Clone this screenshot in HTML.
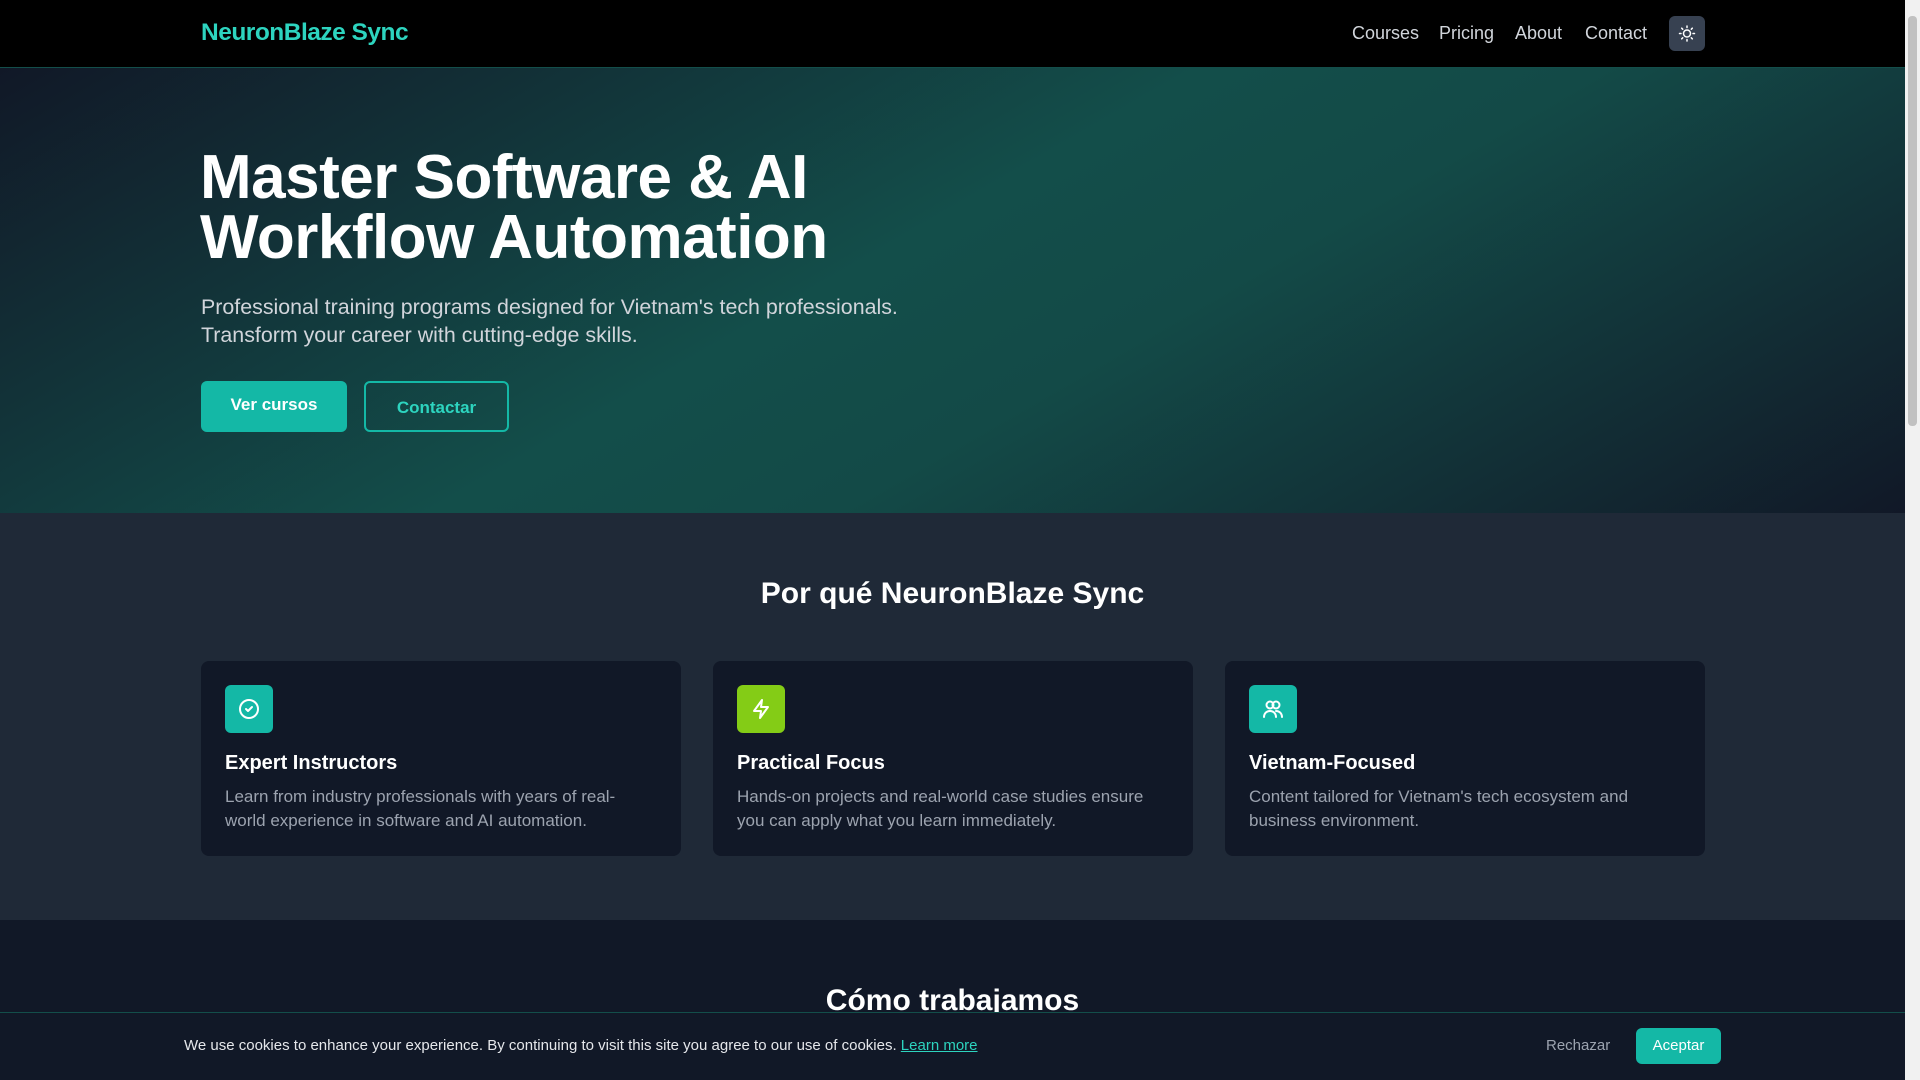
<!DOCTYPE html>
<html><head><meta charset="utf-8"><style>
*{box-sizing:border-box;margin:0;padding:0}
body{width:1920px;height:1080px;overflow:hidden;font-family:"Liberation Sans",sans-serif;background:#111827;position:relative}
.nav{position:absolute;top:0;left:0;width:1905px;height:68px;background:#000;border-bottom:1px solid #134e4a}
.logo{position:absolute;left:201px;top:19px;font-size:24.5px;font-weight:bold;color:#2dd4bf;letter-spacing:-0.5px}
.links{position:absolute;top:23px;font-size:18px;color:#d1d5db}
.tog{position:absolute;left:1669px;top:16px;width:36px;height:35px;background:#374151;border-radius:6px}
.scroll{position:absolute;right:0;top:0;width:15px;height:1080px;background:#f1f1f1}
.scroll div{position:absolute;left:3px;top:16px;width:9px;height:410px;background:#c1c1c1;border-radius:4px}
.hero{position:absolute;top:68px;left:0;width:1905px;height:445px;background:linear-gradient(150deg,#111827 0%,#134e4a 45%,#134a47 60%,#111827 100%)}
h1{position:absolute;left:200px;top:80px;font-size:62px;line-height:60px;color:#fff;font-weight:bold;letter-spacing:-0.5px}
.sub{position:absolute;left:201px;top:225px;font-size:21.4px;line-height:28px;color:#d1d5db}
.b1{position:absolute;left:201px;top:313px;width:146px;height:51px;background:#14b8a6;border-radius:6px;color:#fff;font-weight:bold;font-size:17px;text-align:center;line-height:47px}
.b2{position:absolute;left:364px;top:313px;width:145px;height:51px;border:2px solid #14b8a6;border-radius:6px;color:#2dd4bf;font-weight:bold;font-size:17px;text-align:center;line-height:49px}
.s2{position:absolute;top:513px;left:0;width:1905px;height:407px;background:#1f2937}
.s2 h2{position:absolute;top:64px;width:100%;text-align:center;font-size:30px;color:#fff}
.card{position:absolute;top:148px;width:480px;height:195px;background:#111827;border-radius:8px}
.ic{position:absolute;left:24px;top:24px;width:48px;height:48px;border-radius:6px;display:flex;align-items:center;justify-content:center}
.card h3{position:absolute;left:24px;top:91px;font-size:20px;color:#fff}
.card p{position:absolute;left:24px;top:124px;width:420px;font-size:17px;line-height:24px;color:#9ca3af}
.s3t{position:absolute;top:984px;width:1905px;text-align:center;font-size:30px;color:#fff;font-weight:bold}
.cookie{position:absolute;top:1012px;left:0;width:1905px;height:68px;background:#111827;border-top:1px solid #134e4a}
.cookie .t{position:absolute;left:184px;top:24px;font-size:15px;color:#e5e7eb}
.cookie a{color:#2dd4bf;text-decoration:underline}
.rej{position:absolute;left:1546px;top:24px;font-size:15px;color:#9ca3af}
.acc{position:absolute;left:1636px;top:15px;width:85px;height:36px;background:#14b8a6;border-radius:6px;color:#fff;font-size:15px;text-align:center;line-height:36px}
</style></head><body>
<div class="nav">
<div class="logo">NeuronBlaze Sync</div>
<span class="links" style="left:1352px">Courses</span>
<span class="links" style="left:1439px">Pricing</span>
<span class="links" style="left:1515px">About</span>
<span class="links" style="left:1585px">Contact</span>
<div class="tog"><svg width="36" height="35" viewBox="0 0 36 35"><g stroke="#fff" stroke-width="1.5" fill="none" stroke-linecap="round"><circle cx="18" cy="17.5" r="3.5"/><path d="M18 10v1.5M18 23.5v1.5M10.5 17.5h1.5M24 17.5h1.5M12.7 12.2l1 1M22.3 21.8l1 1M12.7 22.8l1-1M22.3 13.2l1-1"/></g></svg></div>
</div>
<div class="hero">
<h1>Master Software &amp; AI<br>Workflow Automation</h1>
<div class="sub">Professional training programs designed for Vietnam's tech professionals.<br>Transform your career with cutting-edge skills.</div>
<div class="b1">Ver cursos</div>
<div class="b2">Contactar</div>
</div>
<div class="s2">
<h2>Por qué NeuronBlaze Sync</h2>
<div class="card" style="left:201px"><div class="ic" style="background:#14b8a6"><svg width="24" height="24" viewBox="0 0 24 24" fill="none" stroke="#fff" stroke-width="2" stroke-linecap="round" stroke-linejoin="round"><circle cx="12" cy="12" r="9"/><path d="M9 12l2 2 4-4"/></svg></div><h3>Expert Instructors</h3><p>Learn from industry professionals with years of real-world experience in software and AI automation.</p></div>
<div class="card" style="left:713px"><div class="ic" style="background:#84cc16"><svg width="24" height="24" viewBox="0 0 24 24" fill="none" stroke="#fff" stroke-width="2" stroke-linejoin="round"><path d="M13 3L5 14h7l-1 7 8-11h-7z"/></svg></div><h3>Practical Focus</h3><p>Hands-on projects and real-world case studies ensure you can apply what you learn immediately.</p></div>
<div class="card" style="left:1225px"><div class="ic" style="background:#14b8a6"><svg width="24" height="24" viewBox="0 0 24 24" fill="none" stroke="#fff" stroke-width="2" stroke-linecap="round"><circle cx="9" cy="8" r="3.5"/><circle cx="15" cy="8" r="3.5"/><path d="M3 20c0-3.5 2.5-6 6-6s6 2.5 6 6M15 14c3.5 0 6 2.5 6 6"/></svg></div><h3>Vietnam-Focused</h3><p>Content tailored for Vietnam's tech ecosystem and business environment.</p></div>
</div>
<div class="s3t">Cómo trabajamos</div>
<div class="cookie">
<div class="t">We use cookies to enhance your experience. By continuing to visit this site you agree to our use of cookies. <a>Learn more</a></div>
<div class="rej">Rechazar</div>
<div class="acc">Aceptar</div>
</div>
<div class="scroll"><div></div></div>
</body></html>
